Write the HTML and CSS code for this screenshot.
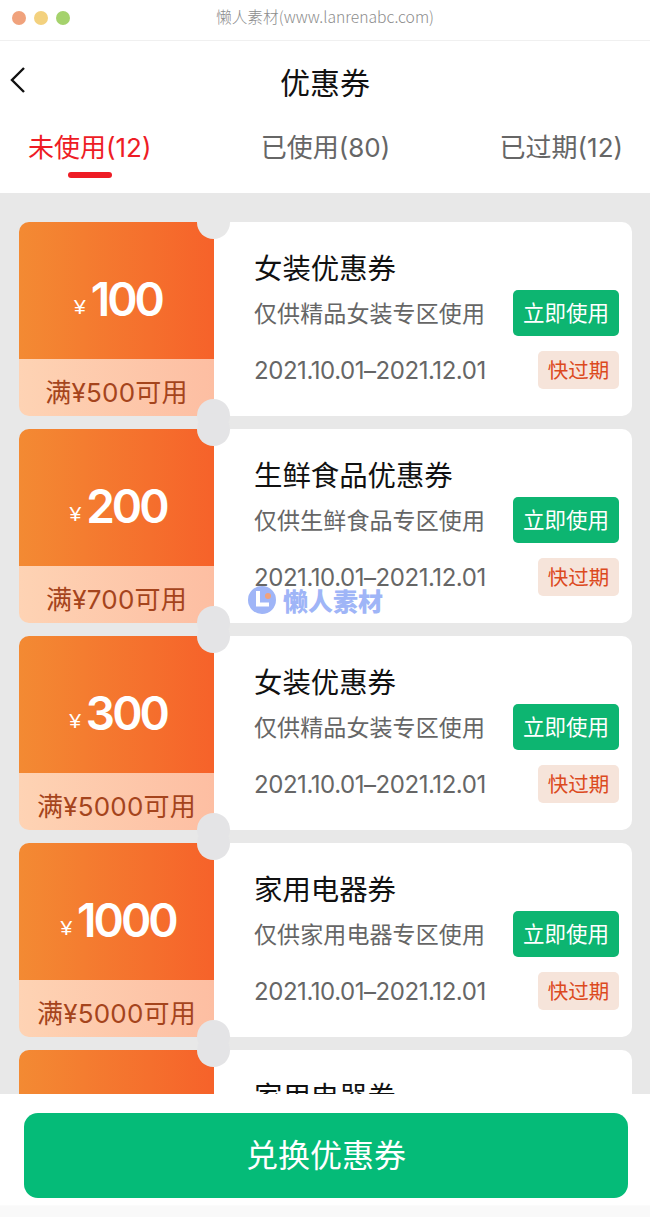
FILE: index.html
```html
<!DOCTYPE html>
<html lang="zh">
<head>
<meta charset="utf-8">
<title>优惠券</title>
<link rel="stylesheet" href="styles.css">
</head>
<body>
<div class="page">
  <header class="window">
    <div class="dots"><i class="dot red"></i><i class="dot yellow"></i><i class="dot green"></i></div>
    <div class="window-title">懒人素材(www.lanrenabc.com)</div>
  </header>
  <nav class="nav">
    <svg class="back" width="18" height="28" viewBox="0 0 18 28"><path d="M16 2 4 14l12 12" fill="none" stroke="#111" stroke-width="2.4"/></svg>
    <h1 class="title">优惠券</h1>
  </nav>
  <div class="tabs">
    <div class="tab active">未使用(12)</div>
    <div class="tab">已使用(80)</div>
    <div class="tab">已过期(12)</div>
  </div>
  <main class="list">
    <article class="card">
      <div class="left">
        <div class="amount"><span class="yen">¥</span><span class="num">100</span></div>
        <div class="limit">满¥500可用</div>
      </div>
      <div class="info">
        <div class="name">女装优惠券</div>
        <div class="row"><span class="desc">仅供精品女装专区使用</span><span class="use">立即使用</span></div>
        <div class="row"><span class="date">2021.10.01–2021.12.01</span><span class="soon">快过期</span></div>
      </div>
    </article>
    <article class="card">
      <div class="left">
        <div class="amount"><span class="yen">¥</span><span class="num">200</span></div>
        <div class="limit">满¥700可用</div>
      </div>
      <div class="info">
        <div class="name">生鲜食品优惠券</div>
        <div class="row"><span class="desc">仅供生鲜食品专区使用</span><span class="use">立即使用</span></div>
        <div class="row"><span class="date">2021.10.01–2021.12.01</span><span class="soon">快过期</span></div>
      </div>
    </article>
    <article class="card">
      <div class="left">
        <div class="amount"><span class="yen">¥</span><span class="num">300</span></div>
        <div class="limit">满¥5000可用</div>
      </div>
      <div class="info">
        <div class="name">女装优惠券</div>
        <div class="row"><span class="desc">仅供精品女装专区使用</span><span class="use">立即使用</span></div>
        <div class="row"><span class="date">2021.10.01–2021.12.01</span><span class="soon">快过期</span></div>
      </div>
    </article>
    <article class="card">
      <div class="left">
        <div class="amount"><span class="yen">¥</span><span class="num">1000</span></div>
        <div class="limit">满¥5000可用</div>
      </div>
      <div class="info">
        <div class="name">家用电器券</div>
        <div class="row"><span class="desc">仅供家用电器专区使用</span><span class="use">立即使用</span></div>
        <div class="row"><span class="date">2021.10.01–2021.12.01</span><span class="soon">快过期</span></div>
      </div>
    </article>
    <article class="card">
      <div class="left">
        <div class="amount"></div>
      </div>
      <div class="info">
        <div class="name">家用电器券</div>
      </div>
    </article>
    <div class="watermark">
      <svg width="28" height="28" viewBox="0 0 28 28"><circle cx="14" cy="14" r="14" fill="#9fb5f7"/><path d="M10 5v13.5h11" fill="none" stroke="#fff" stroke-width="4"/><circle cx="20" cy="10" r="3" fill="#f2a27a"/></svg>
      <span class="mark-text">懒人素材</span>
    </div>
  </main>
  <footer class="footer">
    <button class="exchange" type="button">兑换优惠券</button>
  </footer>
</div>
</body>
</html>
```

FILE: styles.css
```css
* { box-sizing: border-box; margin: 0; padding: 0; }
html, body { width: 650px; height: 1217px; overflow: hidden; }
body { background: #fff; font-family: "Inter", "Noto Sans CJK SC", sans-serif; }
.page { width: 650px; height: 1217px; display: flex; flex-direction: column; position: relative; }

.window { height: 41px; flex: none; display: flex; align-items: center; justify-content: center; position: relative; border-bottom: 1px solid #f0f0f0; padding-bottom: 7px; }
.dots { position: absolute; left: 12px; top: 11px; display: flex; gap: 8px; }
.dot { width: 14px; height: 14px; border-radius: 50%; display: block; }
.red { background: #f0a27c; }
.yellow { background: #f3d17e; }
.green { background: #a5d26c; }
.window-title { font-size: 15.7px; color: #8c8c8c; font-family: "Noto Sans CJK SC", sans-serif; font-weight: 300; }

.nav { height: 82px; flex: none; display: flex; align-items: center; justify-content: center; position: relative; padding-bottom: 2px; }
.back { position: absolute; left: 8px; top: 25px; }
.title { font-size: 30px; font-weight: 400; color: #111; line-height: 40px; font-family: "Noto Sans CJK SC", sans-serif; }

.tabs { height: 70px; flex: none; display: flex; justify-content: space-between; padding: 0 27px 0 28px; }
.tab { font-size: 26px; line-height: 50px; color: #666; position: relative; height: 55px; white-space: nowrap; }
.active { color: #ee1c25; }
.active::after { content: ""; position: absolute; left: 40px; width: 44px; height: 6px; bottom: 0; background: #ee1c25; border-radius: 3px; }

.list { flex: 1; min-height: 0; background: #e8e8e8; padding: 29px 18px 0 19px; overflow: hidden; display: flex; flex-direction: column; gap: 13px; position: relative; }
.card { flex: none; height: 194px; display: flex; position: relative; }
.card::before, .card::after { content: ""; position: absolute; left: 178px; width: 33px; height: 33px; border-radius: 50%; background: #e4e4e6; z-index: 1; }
.card::before { top: -16px; }
.card::after { bottom: -16px; }
.card:first-child::before { background: #e8e8e8; }

.left { width: 195px; flex: none; display: flex; flex-direction: column; border-radius: 10px 0 0 10px; overflow: hidden; }
.amount { height: 137px; flex: none; padding: 16px 0 0 3px; display: flex; align-items: center; justify-content: center; gap: 5px; color: #fff; background: linear-gradient(90deg, #f38a33, #f6622a); }
.yen { font-size: 21px; margin-top: 16px; font-weight: 500; font-family: "Liberation Sans", sans-serif; }
.num { font-size: 46px; font-weight: 600; letter-spacing: -3px; line-height: 1; }
.limit { flex: 1; padding-top: 5px; display: flex; align-items: center; justify-content: center; font-size: 26px; color: #a5441c; background: linear-gradient(90deg, #fed3b4, #fdbea2); white-space: nowrap; letter-spacing: .2px; }

.info { flex: 1; background: #fff; border-radius: 0 10px 10px 0; padding: 25px 13px 0 40px; display: flex; flex-direction: column; }
.name { font-size: 28.4px; line-height: 40px; height: 43px; color: #111; font-family: "Noto Sans CJK SC", sans-serif; white-space: nowrap; }
.row { display: flex; align-items: center; justify-content: space-between; margin-bottom: 15px; }
.desc { font-size: 23px; letter-spacing: .1px; color: #666; padding-bottom: 3px; font-family: "Noto Sans CJK SC", sans-serif; white-space: nowrap; }
.date { font-size: 24px; color: #666; letter-spacing: -.45px; padding-top: 1px; white-space: nowrap; }
.use { width: 106px; height: 46px; padding-bottom: 3px; display: flex; align-items: center; justify-content: center; background: #0db571; color: #fff; border-radius: 5px; font-size: 21.5px; font-family: "Noto Sans CJK SC", sans-serif; }
.soon { width: 81px; height: 38px; padding-bottom: 3px; display: flex; align-items: center; justify-content: center; background: #f6e4da; color: #dc4a1e; border-radius: 5px; font-size: 20.5px; font-family: "Noto Sans CJK SC", sans-serif; }

.watermark { position: absolute; left: 248px; top: 393px; display: flex; align-items: center; gap: 7px; z-index: 2; }
.mark-text { font-size: 25px; font-weight: 900; color: #9fb5f7; line-height: 28px; font-family: "Noto Sans CJK SC", sans-serif; }

.footer { height: 123px; flex: none; background: linear-gradient(#fff 90%, #f9f9f9 91%); padding: 19px 22px 0 24px; }
.exchange { display: block; width: 100%; height: 85px; padding-bottom: 6px; border: 0; border-radius: 14px; background: #05bb78; color: #fff; font-size: 32px; font-family: "Noto Sans CJK SC", sans-serif; }
```
